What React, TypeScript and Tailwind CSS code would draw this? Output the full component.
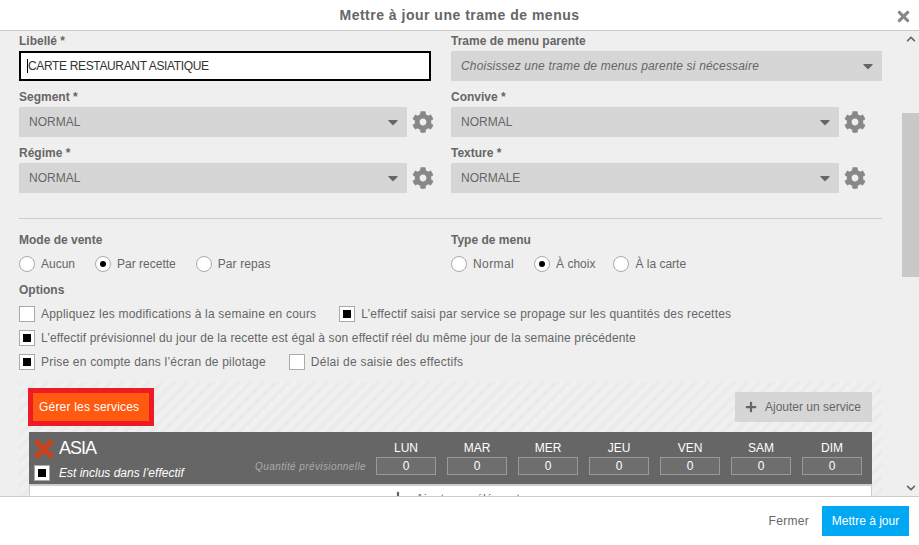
import React from 'react';
import { FaCaretDown, FaChevronDown, FaChevronUp, FaCog, FaPlus, FaTimes } from 'react-icons/fa';

const DAYS = ['LUN', 'MAR', 'MER', 'JEU', 'VEN', 'SAM', 'DIM'];

const Label = ({ children }: { children: React.ReactNode }) => (
  <div className="h-[14px] leading-[14px] text-[12px] font-bold text-[#666]">{children}</div>
);

const Select = ({ value, italic, gear, wide }: { value: string; italic?: boolean; gear?: boolean; wide?: boolean }) => (
  <div className="flex items-center">
    <div className={`h-[30px] shrink-0 ${wide ? 'w-[431px]' : 'w-[388px]'} bg-[#d6d6d6] flex items-center justify-between pl-[10px] pr-[6px] text-[12px] text-[#666] ${italic ? 'italic tracking-[0.18px]' : ''}`}>
      <span>{value}</span>
      <FaCaretDown className="text-[#666] text-[16px]" />
    </div>
    {gear && <FaCog className="ml-[5px] shrink-0 text-[#888] text-[22px]" />}
  </div>
);

const Field = ({ label, children }: { label: string; children: React.ReactNode }) => (
  <div className="mb-[9px]">
    <Label>{label}</Label>
    <div className="mt-[3px]">{children}</div>
  </div>
);

const Radio = ({ label, checked, className = '' }: { label: string; checked?: boolean; className?: string }) => (
  <div className={`flex items-center gap-[6px] text-[12px] leading-[16px] text-[#666] ${className}`}>
    <span className="w-[16px] h-[16px] rounded-full border border-[#aaa] bg-white flex items-center justify-center">
      {checked && <span className="w-[6px] h-[6px] rounded-full bg-black" />}
    </span>
    <span>{label}</span>
  </div>
);

const Check = ({ label, checked, className = 'tracking-[0.2px]' }: { label?: string; checked?: boolean; className?: string }) => (
  <div className={`flex items-center gap-[6px] text-[12px] leading-[16px] text-[#666] ${className}`}>
    <span className="w-[16px] h-[16px] border border-[#aaa] bg-white flex items-center justify-center shrink-0">
      {checked && <span className="w-[8px] h-[8px] bg-black" />}
    </span>
    {label && <span>{label}</span>}
  </div>
);

export default function App() {
  return (
    <div className="w-[919px] h-[545px] flex flex-col bg-white overflow-hidden font-['Liberation_Sans',Arial,sans-serif]">
      <div className="h-[31px] shrink-0 border-b border-[#ccc] flex items-center relative">
        <div className="w-full text-center text-[14px] font-bold text-[#666] tracking-[0.5px]">Mettre à jour une trame de menus</div>
        <FaTimes className="absolute right-[7px] top-[8px] text-[#888] text-[17px]" />
      </div>

      <div className="flex-1 min-h-0 flex bg-[#efefef]">
        <div className="flex-1 min-w-0 overflow-hidden pl-[19px] pr-[20px] pt-[3px]">
          <div className="flex gap-[20px]">
            <div className="w-[412px]">
              <Field label="Libellé *">
                <div className="h-[30px] border-2 border-black bg-white flex items-center pl-[6px] text-[12px] text-[#333] tracking-[-0.35px]">
                  <span className="border-l border-black leading-[14px]">CARTE RESTAURANT ASIATIQUE</span>
                </div>
              </Field>
              <Field label="Segment *"><Select value="NORMAL" gear /></Field>
              <Field label="Régime *"><Select value="NORMAL" gear /></Field>
            </div>
            <div className="w-[431px]">
              <Field label="Trame de menu parente">
                <Select value="Choisissez une trame de menus parente si nécessaire" italic wide />
              </Field>
              <Field label="Convive *"><Select value="NORMAL" gear /></Field>
              <Field label="Texture *"><Select value="NORMALE" gear /></Field>
            </div>
          </div>

          <div className="h-px bg-[#ccc] mt-[16px] mb-[14px]" />

          <div className="flex gap-[20px]">
            <div className="w-[412px]">
              <Label>Mode de vente</Label>
              <div className="flex gap-[20px] mt-[9px]">
                <Radio label="Aucun" />
                <Radio label="Par recette" checked />
                <Radio label="Par repas" className="tracking-[0.1px]" />
              </div>
            </div>
            <div className="w-[431px]">
              <Label>Type de menu</Label>
              <div className="flex gap-[20px] mt-[9px]">
                <Radio label="Normal" className="tracking-[0.4px]" />
                <Radio label="À choix" checked className="-mr-[2px]" />
                <Radio label="À la carte" />
              </div>
            </div>
          </div>

          <div className="mt-[11px]">
            <Label>Options</Label>
            <div className="mt-[9px] flex flex-col gap-[8px]">
              <div className="flex gap-[23px]">
                <Check label="Appliquez les modifications à la semaine en cours" />
                <Check label="L’effectif saisi par service se propage sur les quantités des recettes" checked />
              </div>
              <Check label="L’effectif prévisionnel du jour de la recette est égal à son effectif réel du même jour de la semaine précédente" checked className="tracking-[0.145px]" />
              <div className="flex gap-[23px]">
                <Check label="Prise en compte dans l’écran de pilotage" checked />
                <Check label="Délai de saisie des effectifs" className="tracking-[0.25px]" />
              </div>
            </div>
          </div>

          <div className="mt-[12px] px-[10px] pt-[10px] pb-[20px] bg-[repeating-linear-gradient(135deg,#ebebeb_0px,#ebebeb_4px,#f0f0f0_4px,#f0f0f0_9px)]">
            <div className="flex items-center justify-between">
              <div className="ml-[4px] w-[116px] h-[28px] bg-[#ff5a0f] outline-[5px] outline-solid outline-[#ed1c24] flex items-center pl-[6px] text-[12px] text-white tracking-[0.2px]">
                Gérer les services
              </div>
              <div className="w-[137px] h-[30px] bg-[#d6d6d6] flex items-center pl-[10px] gap-[8px] text-[12px] text-[#666]">
                <FaPlus className="text-[12px] text-[#666]" />
                <span>Ajouter un service</span>
              </div>
            </div>

            <div className="mt-[10px] h-[52px] bg-[#666] flex justify-between pl-[5px] pr-[10px] text-white">
              <div className="flex flex-col">
                <div className="flex items-center h-[33px] gap-[6px]">
                  <FaTimes className="text-[#c8421b] text-[28px] -ml-[4px] -mr-[5px]" />
                  <span className="text-[18px] tracking-[-1px]">ASIA</span>
                </div>
                <div className="flex items-center gap-[9px] italic text-[12px] leading-[16px]">
                  <Check checked />
                  <span className="text-white">Est inclus dans l’effectif</span>
                </div>
              </div>
              <div className="flex items-start gap-[11px]">
                <div className="mt-[27px] -mr-[1px] italic text-[10px] tracking-[0.4px] text-[#aaa]">Quantité prévisionnelle</div>
                {DAYS.map((day) => (
                  <div key={day} className="w-[60px] text-center text-[12px]">
                    <div className="h-[14px] leading-[14px] mt-[9px] mb-[2px]">{day}</div>
                    <div className="h-[18px] leading-[16px] border border-[#999] bg-[#6e6e6e]">0</div>
                  </div>
                ))}
              </div>
            </div>

            <div className="h-[40px] bg-white border border-[#ccc] border-t-2 flex justify-center pt-[4px] pl-[11px] text-[12px] text-[#666] tracking-[0.2px]">
              <div className="flex items-start gap-[12px]">
                <FaPlus className="text-[12px] mt-[1px]" />
                <span>Ajouter un élément</span>
              </div>
            </div>
          </div>
        </div>

        <div className="w-[17px] shrink-0 flex flex-col items-center relative">
          <FaChevronUp className="mt-[3px] text-[10px] text-[#666]" />
          <div className="w-full h-[164px] mt-[69px] bg-[#c8c8c8]" />
          <FaChevronDown className="absolute bottom-[3px] text-[10px] text-[#666]" />
        </div>
      </div>

      <div className="h-[49px] shrink-0 border-t border-[#ccc] flex items-center justify-end pr-[10px] gap-[13px] text-[12px]">
        <span className="text-[#666] tracking-[0.3px]">Fermer</span>
        <div className="w-[87px] h-[30px] bg-[#00a8f3] text-white flex items-center justify-center">Mettre à jour</div>
      </div>
    </div>
  );
}
